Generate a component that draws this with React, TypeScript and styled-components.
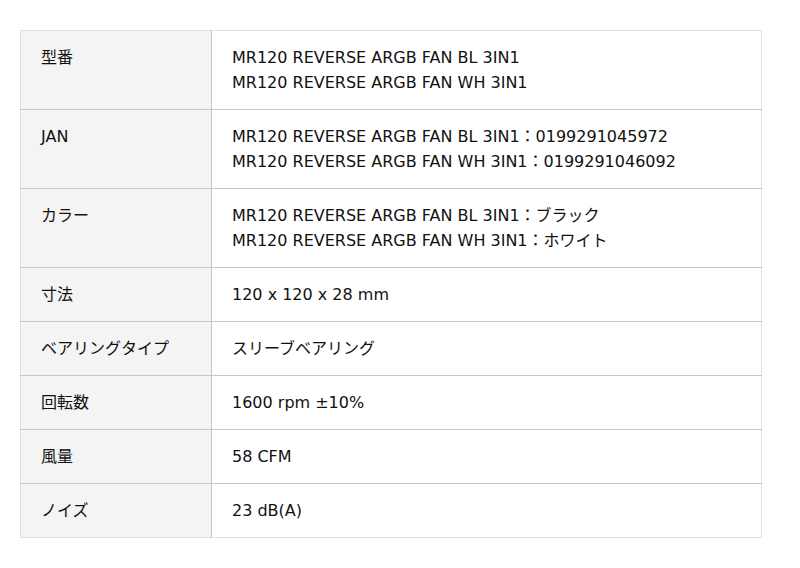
import styled, { createGlobalStyle } from 'styled-components';

const specs: { label: string; values: string[] }[] = [
  {
    label: '型番',
    values: ['MR120 REVERSE ARGB FAN BL 3IN1', 'MR120 REVERSE ARGB FAN WH 3IN1'],
  },
  {
    label: 'JAN',
    values: [
      'MR120 REVERSE ARGB FAN BL 3IN1：0199291045972',
      'MR120 REVERSE ARGB FAN WH 3IN1：0199291046092',
    ],
  },
  {
    label: 'カラー',
    values: [
      'MR120 REVERSE ARGB FAN BL 3IN1：ブラック',
      'MR120 REVERSE ARGB FAN WH 3IN1：ホワイト',
    ],
  },
  { label: '寸法', values: ['120 x 120 x 28 mm'] },
  { label: 'ベアリングタイプ', values: ['スリーブベアリング'] },
  { label: '回転数', values: ['1600 rpm ±10%'] },
  { label: '風量', values: ['58 CFM'] },
  { label: 'ノイズ', values: ['23 dB(A)'] },
];

function App() {
  return (
    <>
      <GlobalStyle />
      <Page>
        <SpecTable>
          <tbody>
            {specs.map((s) => (
              <Row key={s.label}>
                <Label>{s.label}</Label>
                <Value>
                  {s.values.map((v) => (
                    <Line key={v}>{v}</Line>
                  ))}
                </Value>
              </Row>
            ))}
          </tbody>
        </SpecTable>
      </Page>
    </>
  );
}

export default App;

const GlobalStyle = createGlobalStyle`
  body {
    margin: 0;
    background: #fff;
    font-family: "DejaVu Sans", "Noto Sans CJK JP", sans-serif;
    color: #111;
  }
`;

const Page = styled.div`
  padding: 30px 38px 0 20px;
`;

const SpecTable = styled.table`
  width: 742px;
  border-collapse: collapse;
  border: 1px solid #e2e2e2;
  font-size: 16px;
  line-height: 25px;
`;

const Row = styled.tr`
  & + & td {
    border-top: 1px solid #c6c6c6;
  }
`;

const Label = styled.td`
  width: 150px;
  padding: 14px 20px 14px 20px;
  background: #f4f4f4;
  border-right: 1px solid #c6c6c6;
  vertical-align: top;
`;

const Value = styled.td`
  padding: 14px 20px 14px 20px;
  vertical-align: top;
`;

const Line = styled.div``;
